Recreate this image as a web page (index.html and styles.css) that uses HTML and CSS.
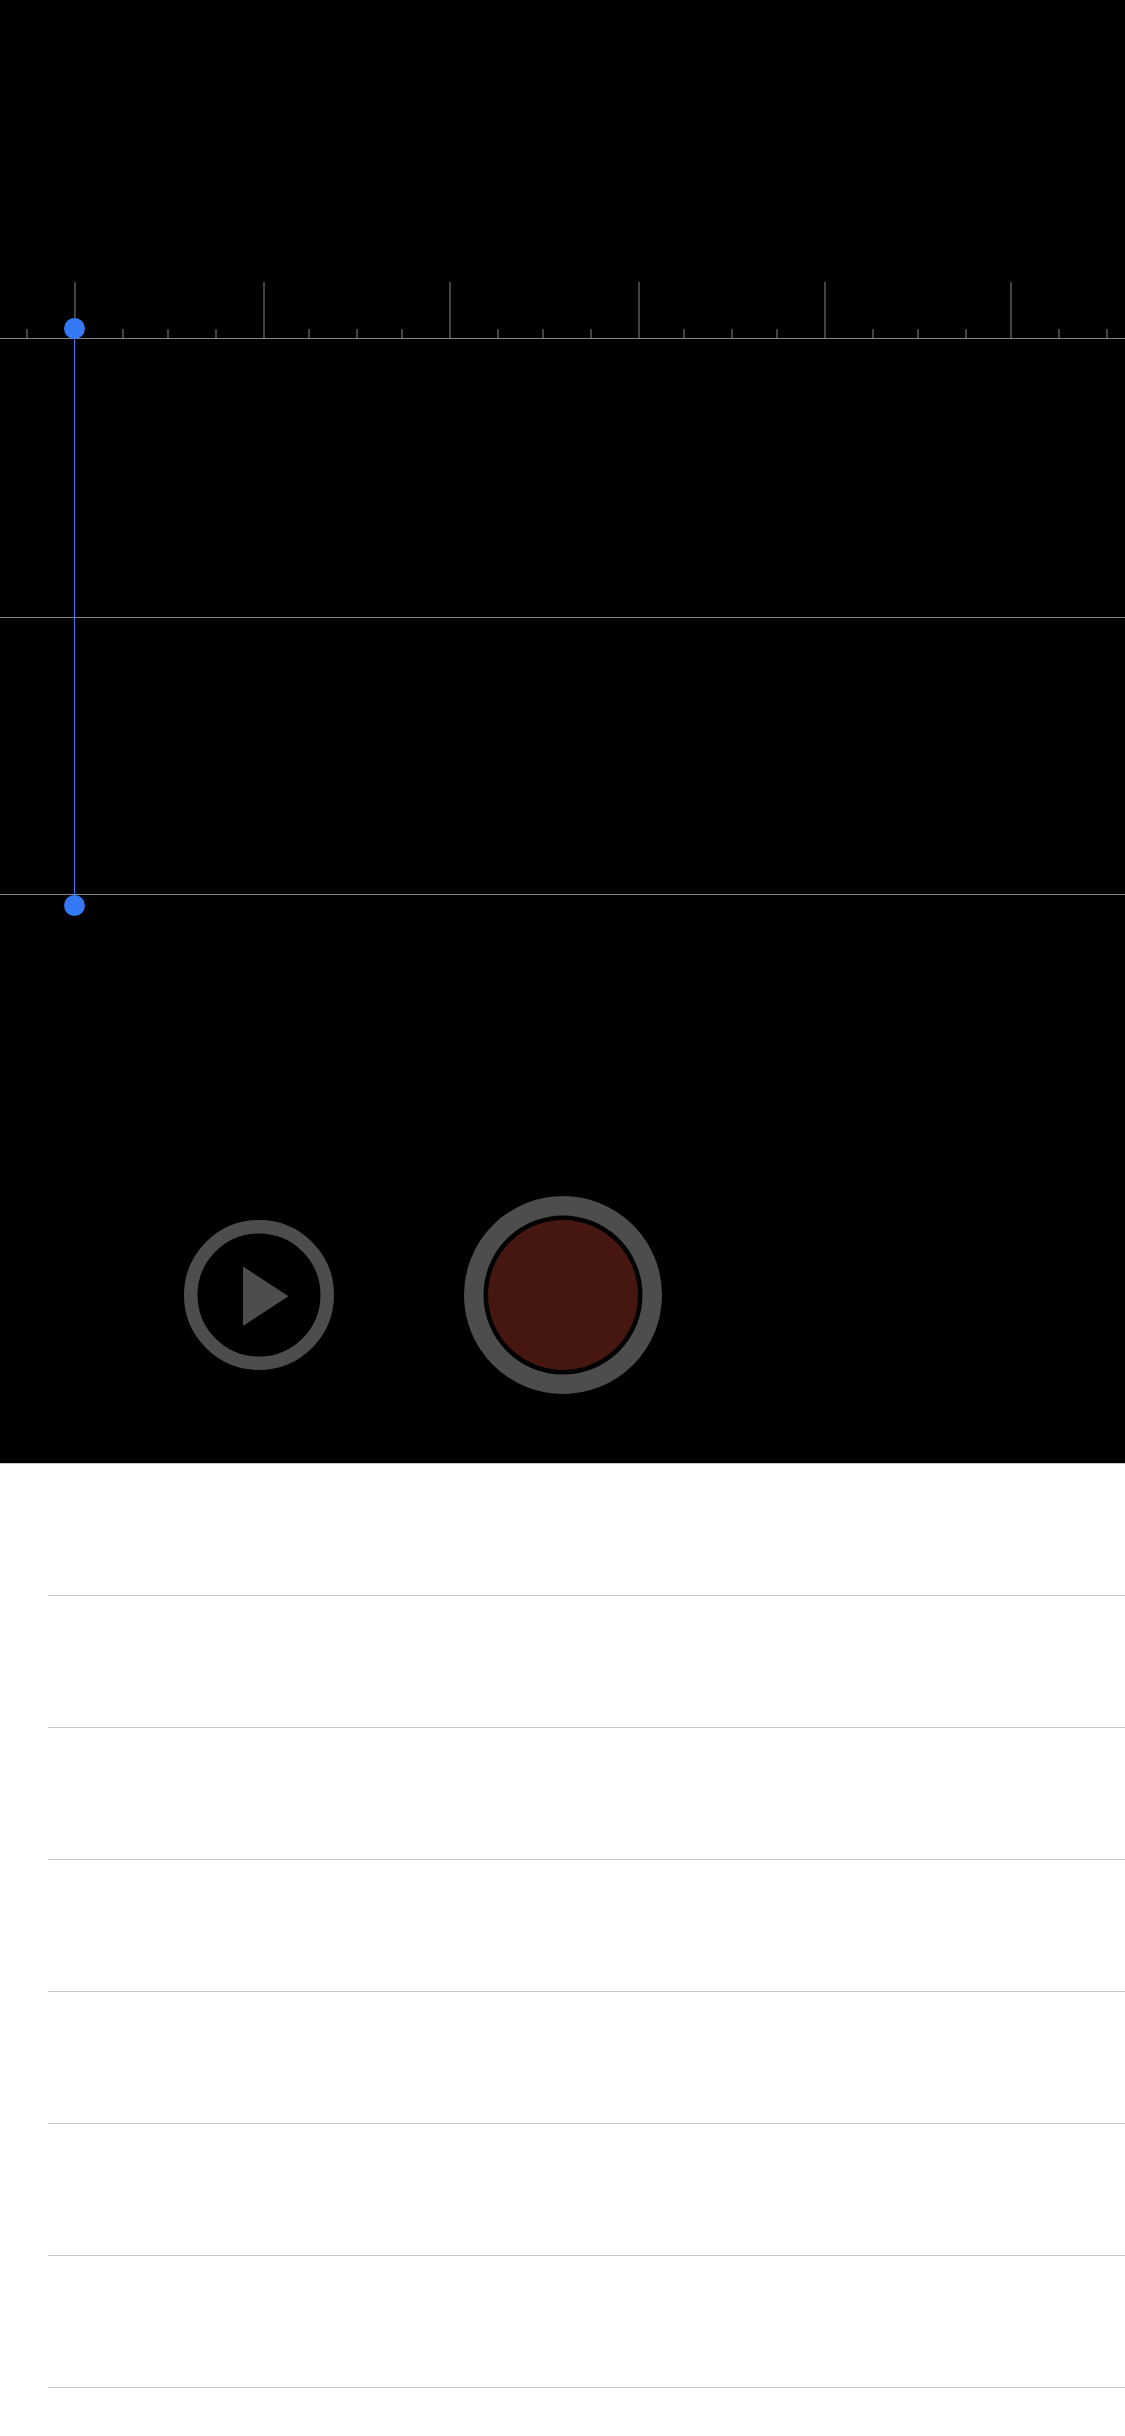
FILE: index.html
```
<!DOCTYPE html>
<html lang="en">
<head>
<meta charset="utf-8">
<title>Recorder</title>
<link rel="stylesheet" href="styles.css">
</head>
<body>
<main class="app">
  <section class="recorder">
    <svg class="ruler" width="1125" height="56" viewBox="0 0 1125 56" aria-hidden="true">
      <path class="tick" d="M75 0V56M264 0V56M450 0V56M639 0V56M825 0V56M1011 0V56"/>
      <path class="tick" d="M27 47V56M123 47V56M168 47V56M216 47V56M309 47V56M357 47V56M402 47V56M498 47V56M543 47V56M591 47V56M684 47V56M732 47V56M777 47V56M873 47V56M918 47V56M966 47V56M1059 47V56M1107 47V56"/>
    </svg>
    <div class="waveform">
      <div class="lane"></div>
      <div class="lane"></div>
      <div class="playhead"></div>
    </div>
    <div class="controls">
      <button class="play" aria-label="Play">
        <svg width="150" height="150" viewBox="0 0 150 150">
          <circle cx="75" cy="75" r="68.25" fill="none" stroke="#4d4d4d" stroke-width="13.5"/>
          <path d="M59 46.5V106L104.5 76.3Z" fill="#4d4d4d"/>
        </svg>
      </button>
      <button class="record" aria-label="Record">
        <svg width="198" height="198" viewBox="0 0 198 198">
          <circle cx="99" cy="99" r="89.25" fill="none" stroke="#4d4d4d" stroke-width="19.5"/>
          <circle cx="99" cy="99" r="75" fill="#461611"/>
        </svg>
      </button>
    </div>
  </section>
  <ul class="recordings">
    <li class="row"></li>
    <li class="row"></li>
    <li class="row"></li>
    <li class="row"></li>
    <li class="row"></li>
    <li class="row"></li>
    <li class="row"></li>
  </ul>
</main>
</body>
</html>
```
FILE: styles.css
```
* {
  box-sizing: border-box;
}

body {
  margin: 0;
  background: #fff;
  font-family: "Liberation Sans", sans-serif;
}

.app {
  display: flex;
  flex-direction: column;
  height: 2436px;
  overflow: hidden;
}

.recorder {
  display: flex;
  flex-direction: column;
  height: 1463px;
  padding-top: 282px;
  background: #000;
}

.ruler {
  display: block;
}

.tick {
  stroke: #424242;
  stroke-width: 2;
}

.waveform {
  position: relative;
  border-top: 1px solid #868686;
}

.lane {
  height: 279px;
  border-bottom: 1px solid #868686;
}

.lane + .lane {
  height: 277px;
}

.playhead {
  position: absolute;
  top: 0;
  bottom: 0;
  left: 74px;
  width: 1px;
  background: #3478f6;
}

.playhead::before,
.playhead::after {
  content: "";
  position: absolute;
  left: -9.7px;
  width: 21px;
  height: 21px;
  border-radius: 50%;
  background: #3478f6;
}

.playhead::before {
  top: -21px;
}

.playhead::after {
  bottom: -21px;
}

.controls {
  display: flex;
  align-items: center;
  gap: 130px;
  padding: 301px 0 0 184px;
}

.controls button {
  padding: 0;
  border: 0;
  background: none;
}

.controls svg {
  display: block;
}

.recordings {
  margin: 0;
  padding: 0 0 0 48px;
  border-top: 1px solid #c6c6c8;
  list-style: none;
}

.row {
  height: 132px;
  border-bottom: 1px solid #c6c6c8;
}
```
